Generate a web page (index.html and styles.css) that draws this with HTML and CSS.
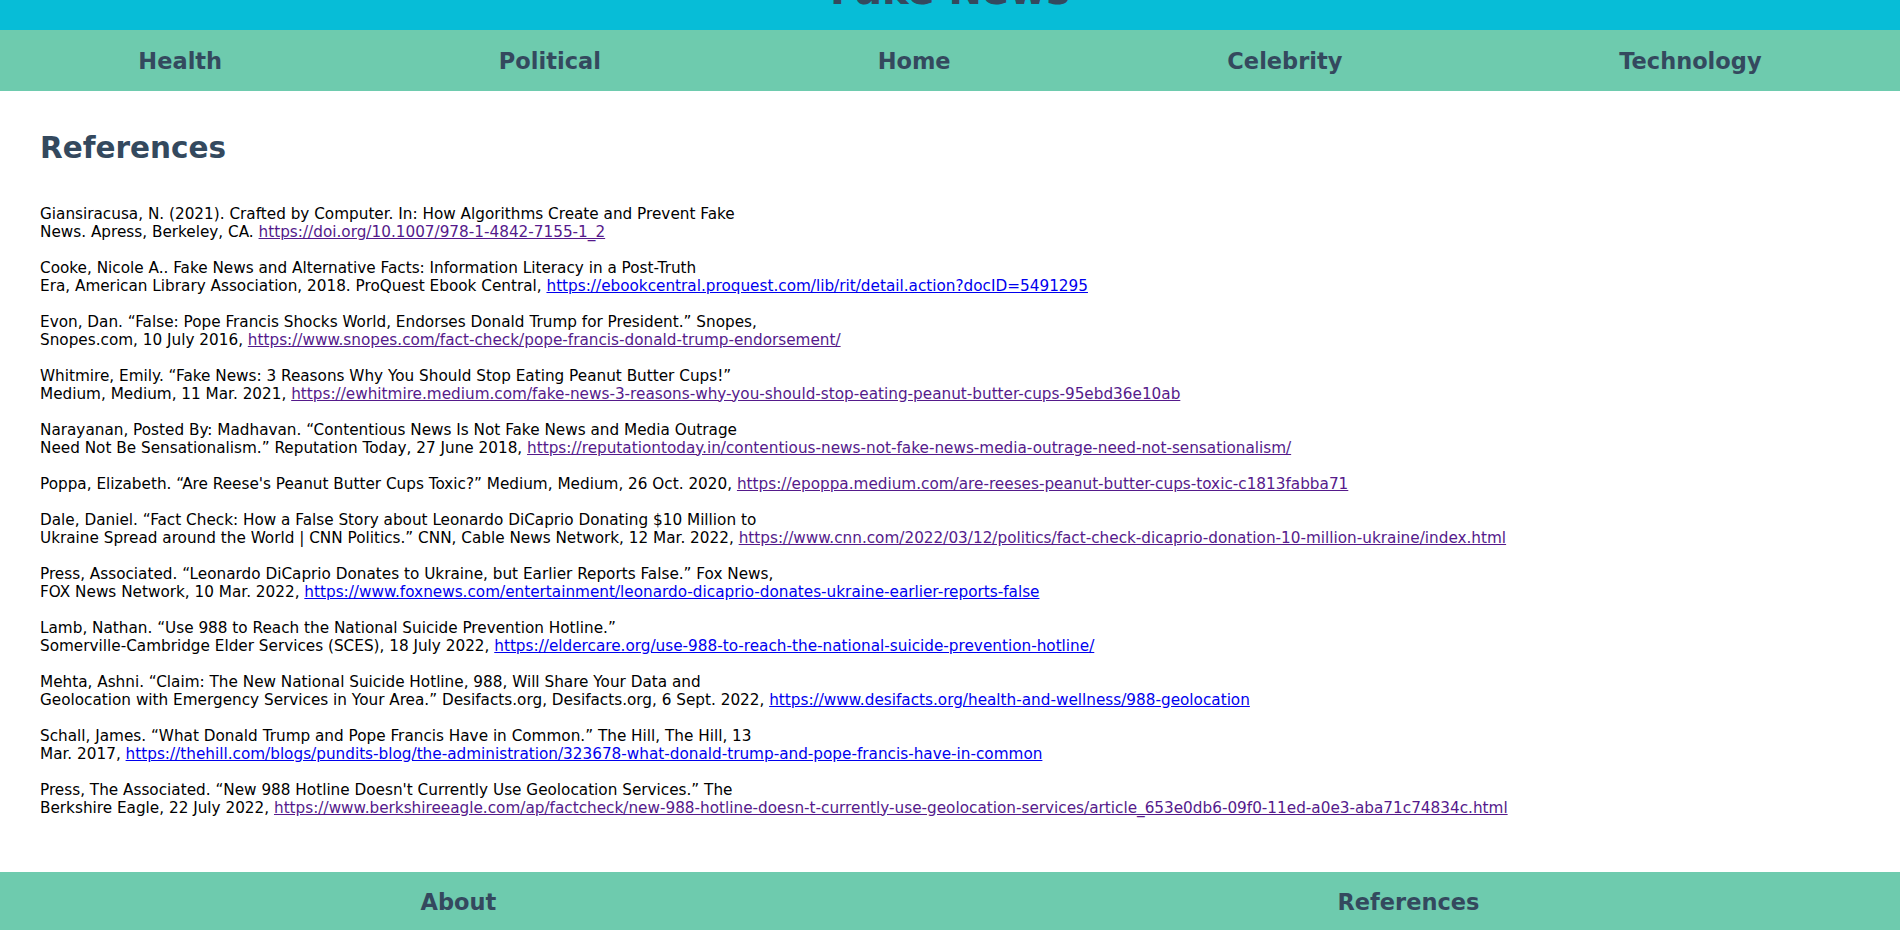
FILE: index.html
```html
<!DOCTYPE html>
<html lang="en">
<head>
<meta charset="utf-8">
<title>References - Fake News</title>
<link rel="stylesheet" href="styles.css">
</head>
<body>
<header class="site-header">
  <h1 class="site-title">Fake News</h1>
</header>
<nav class="top-nav">
  <a class="nav-link" href="#">Health</a>
  <a class="nav-link" href="#">Political</a>
  <a class="nav-link" href="#">Home</a>
  <a class="nav-link" href="#">Celebrity</a>
  <a class="nav-link" href="#">Technology</a>
</nav>
<main class="content">
  <h2 class="page-heading">References</h2>
  <p class="refs">
Giansiracusa, N. (2021). Crafted by Computer. In: How Algorithms Create and Prevent Fake<br>News. Apress, Berkeley, CA. <a class="visited" href="#">https://doi.org/10.1007/978-1-4842-7155-1_2</a><br><br>
Cooke, Nicole A.. Fake News and Alternative Facts: Information Literacy in a Post-Truth<br>Era, American Library Association, 2018. ProQuest Ebook Central, <a class="link" href="#">https://ebookcentral.proquest.com/lib/rit/detail.action?docID=5491295</a><br><br>
Evon, Dan. “False: Pope Francis Shocks World, Endorses Donald Trump for President.” Snopes,<br>Snopes.com, 10 July 2016, <a class="visited" href="#">https://www.snopes.com/fact-check/pope-francis-donald-trump-endorsement/</a><br><br>
Whitmire, Emily. “Fake News: 3 Reasons Why You Should Stop Eating Peanut Butter Cups!”<br>Medium, Medium, 11 Mar. 2021, <a class="visited" href="#">https://ewhitmire.medium.com/fake-news-3-reasons-why-you-should-stop-eating-peanut-butter-cups-95ebd36e10ab</a><br><br>
Narayanan, Posted By: Madhavan. “Contentious News Is Not Fake News and Media Outrage<br>Need Not Be Sensationalism.” Reputation Today, 27 June 2018, <a class="visited" href="#">https://reputationtoday.in/contentious-news-not-fake-news-media-outrage-need-not-sensationalism/</a><br><br>
Poppa, Elizabeth. “Are Reese's Peanut Butter Cups Toxic?” Medium, Medium, 26 Oct. 2020, <a class="visited" href="#">https://epoppa.medium.com/are-reeses-peanut-butter-cups-toxic-c1813fabba71</a><br><br>
Dale, Daniel. “Fact Check: How a False Story about Leonardo DiCaprio Donating $10 Million to<br>Ukraine Spread around the World | CNN Politics.” CNN, Cable News Network, 12 Mar. 2022, <a class="visited" href="#">https://www.cnn.com/2022/03/12/politics/fact-check-dicaprio-donation-10-million-ukraine/index.html</a><br><br>
Press, Associated. “Leonardo DiCaprio Donates to Ukraine, but Earlier Reports False.” Fox News,<br>FOX News Network, 10 Mar. 2022, <a class="link" href="#">https://www.foxnews.com/entertainment/leonardo-dicaprio-donates-ukraine-earlier-reports-false</a><br><br>
Lamb, Nathan. “Use 988 to Reach the National Suicide Prevention Hotline.”<br>Somerville-Cambridge Elder Services (SCES), 18 July 2022, <a class="link" href="#">https://eldercare.org/use-988-to-reach-the-national-suicide-prevention-hotline/</a><br><br>
Mehta, Ashni. “Claim: The New National Suicide Hotline, 988, Will Share Your Data and<br>Geolocation with Emergency Services in Your Area.” Desifacts.org, Desifacts.org, 6 Sept. 2022, <a class="link" href="#">https://www.desifacts.org/health-and-wellness/988-geolocation</a><br><br>
Schall, James. “What Donald Trump and Pope Francis Have in Common.” The Hill, The Hill, 13<br>Mar. 2017, <a class="link" href="#">https://thehill.com/blogs/pundits-blog/the-administration/323678-what-donald-trump-and-pope-francis-have-in-common</a><br><br>
Press, The Associated. “New 988 Hotline Doesn't Currently Use Geolocation Services.” The<br>Berkshire Eagle, 22 July 2022, <a class="visited" href="#">https://www.berkshireeagle.com/ap/factcheck/new-988-hotline-doesn-t-currently-use-geolocation-services/article_653e0db6-09f0-11ed-a0e3-aba71c74834c.html</a>
  </p>
</main>
<footer class="bottom-nav">
  <a class="nav-link" href="#">About</a>
  <a class="nav-link" href="#">References</a>
</footer>
</body>
</html>
```

FILE: styles.css
```css
html, body {
  margin: 0;
  padding: 0;
  background: #ffffff;
}

body {
  font-family: "DejaVu Sans", Verdana, sans-serif;
  overflow: hidden;
}

.site-header {
  height: 30px;
  background: #07bdd7;
  overflow: hidden;
  text-align: center;
}

.site-title {
  margin: -30px 0 0;
  font-size: 40px;
  line-height: 40px;
  font-weight: bold;
  color: #34495e;
}

.top-nav,
.bottom-nav {
  display: flex;
  justify-content: space-around;
  align-items: center;
  height: 61px;
  background: #6ecbae;
}

.nav-link {
  font-size: 22.5px;
  font-weight: bold;
  color: #34495e;
  text-decoration: none;
}

.content {
  padding: 40px 40px 0;
}

.page-heading {
  margin: 0;
  font-size: 29.5px;
  line-height: 35px;
  font-weight: bold;
  color: #34495e;
}

.refs {
  margin: 38.5px 0 0;
  padding-bottom: 55px;
  font-size: 15.25px;
  line-height: 18px;
  color: #000000;
}

.link {
  color: #0000ee;
}

.visited {
  color: #551a8b;
}
```
